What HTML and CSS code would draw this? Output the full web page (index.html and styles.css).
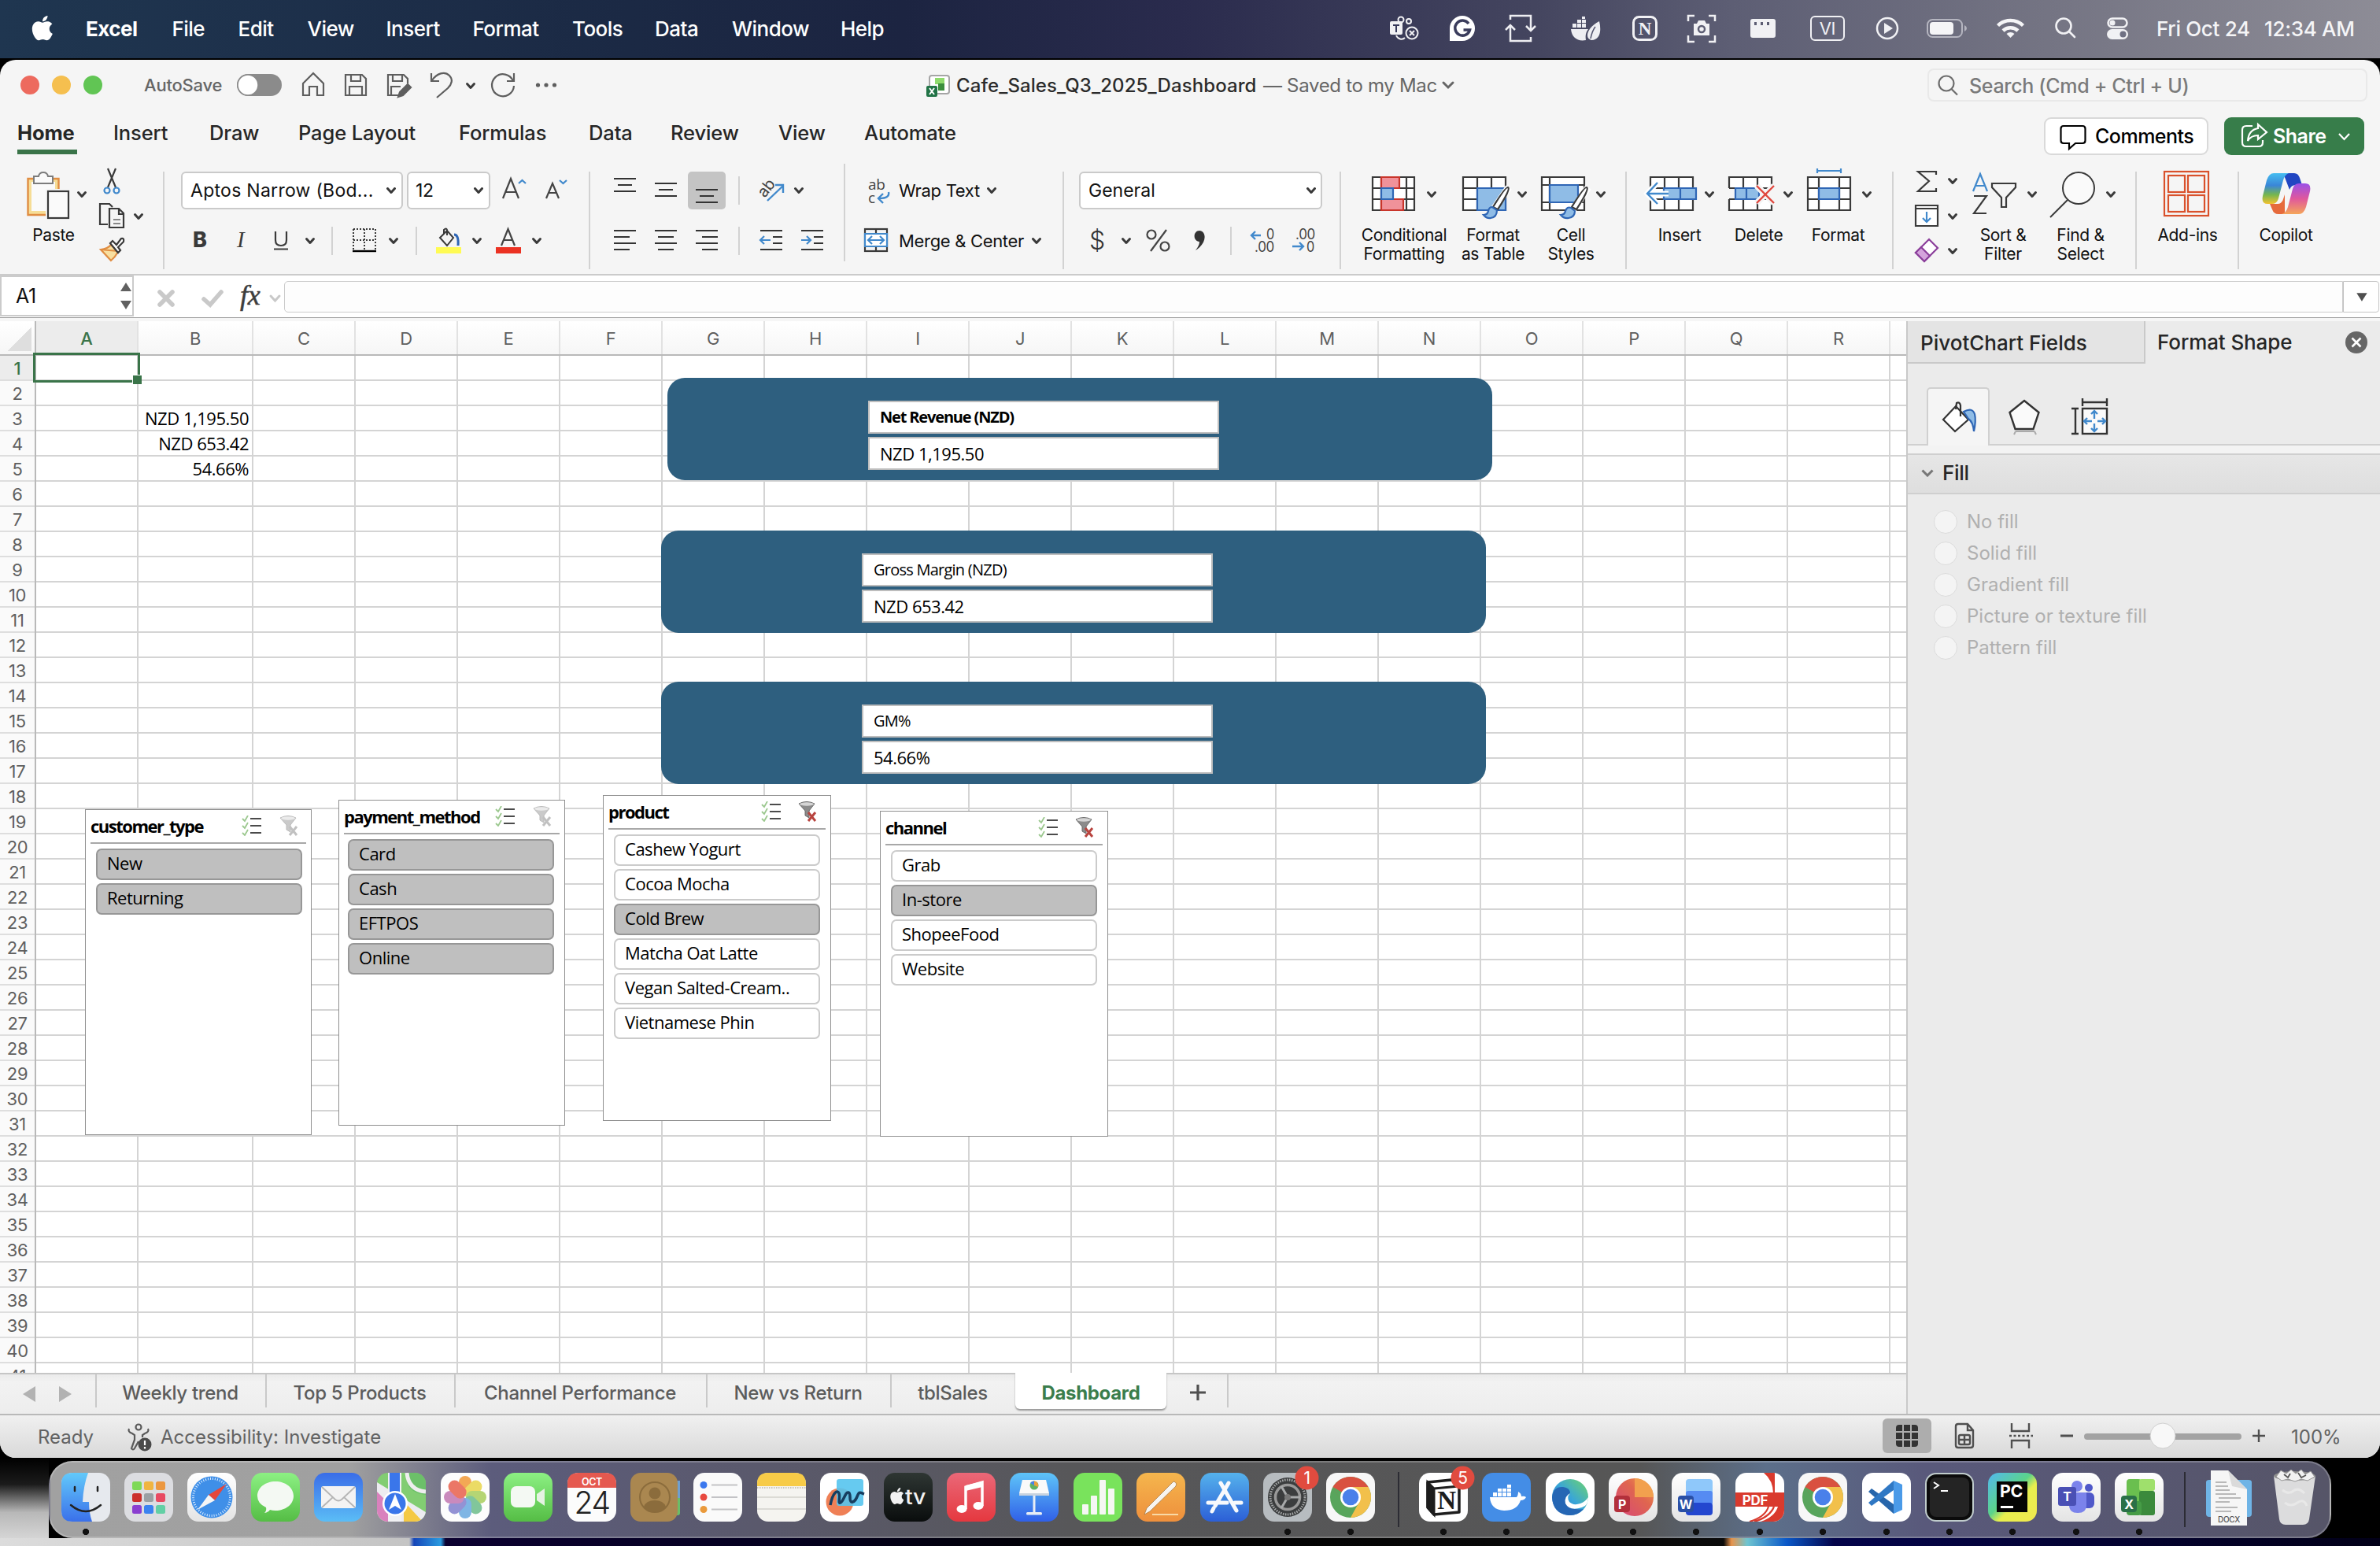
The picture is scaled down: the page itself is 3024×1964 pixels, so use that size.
FILE: index.html
```html
<!DOCTYPE html>
<html lang="en">
<head>
<meta charset="utf-8">
<title>Cafe_Sales_Q3_2025_Dashboard</title>
<link rel="stylesheet" href="styles.css">
</head>
<body>
<svg class="defs" width="0" height="0">
  <defs>
    <path id="chev" d="M1.5 1.5l4.5 5 4.5-5" fill="none" stroke="#3a3a3a" stroke-width="3" stroke-linecap="round" stroke-linejoin="round"/>
    <path id="apple" d="M20.6 13.8c0-3 2.4-4.4 2.5-4.5-1.4-2-3.500-2.300-4.200-2.300-1.800-.2-3.500 1-4.400 1s-2.300-1-3.700-1c-1.900 0-3.700 1.100-4.700 2.800-2 3.500-.5 8.600 1.400 11.400 1 1.400 2.100 2.900 3.600 2.900 1.400-.1 2-.9 3.700-.9s2.200.9 3.700.9c1.500 0 2.500-1.400 3.400-2.800 1.100-1.600 1.500-3.100 1.600-3.200-.1 0-2.900-1.200-2.900-4.300zM17.800 5.300c.8-1 1.300-2.300 1.200-3.600-1.100 0-2.500.7-3.300 1.700-.7.800-1.400 2.200-1.200 3.500 1.200.1 2.500-.6 3.300-1.600z"/>
    <g id="list"><path d="M1 4l3 3 4-7M1 13l3 3 4-7M1 22l3 3 4-7" fill="none" stroke="#9cc88f" stroke-width="1.800"/><path d="M11 4h14M11 13h14M11 22h14" stroke="#4b4b4b" stroke-width="2"/></g>
    <g id="funnel"><path d="M1 3q10-5 20 0l-7 9v9l-5-3v-6z" fill="#8b8b8b" stroke="#6b6b6b"/><ellipse cx="11" cy="3.500" rx="9" ry="2.200" fill="#d5d5d5"/></g>
    <linearGradient id="gBlue" x1="0" y1="0" x2="0" y2="1"><stop offset="0" stop-color="#5ec4f8"/><stop offset="1" stop-color="#3060e8"/></linearGradient>
    <linearGradient id="gGreen" x1="0" y1="0" x2="0" y2="1"><stop offset="0" stop-color="#8cf083"/><stop offset="1" stop-color="#55bd45"/></linearGradient>
    <linearGradient id="gWhite" x1="0" y1="0" x2="0" y2="1"><stop offset="0" stop-color="#ffffff"/><stop offset="1" stop-color="#e4e4e4"/></linearGradient>
    <linearGradient id="gMail" x1="0" y1="0" x2="0" y2="1"><stop offset="0" stop-color="#3a6de8"/><stop offset="1" stop-color="#5bbdf6"/></linearGradient>
    <linearGradient id="gRed" x1="0" y1="0" x2="0" y2="1"><stop offset="0" stop-color="#ea6878"/><stop offset="1" stop-color="#e5383f"/></linearGradient>
    <linearGradient id="gOrange" x1="0" y1="0" x2="0" y2="1"><stop offset="0" stop-color="#f5b64d"/><stop offset="1" stop-color="#ee8f3c"/></linearGradient>
    <linearGradient id="gStore" x1="0" y1="0" x2="0" y2="1"><stop offset="0" stop-color="#55b2ec"/><stop offset="1" stop-color="#2c5fd6"/></linearGradient>
    <linearGradient id="gFinder" x1="0" y1="0" x2="0" y2="1"><stop offset="0" stop-color="#62c9fa"/><stop offset="1" stop-color="#3a70ea"/></linearGradient>
    <linearGradient id="gBlk" x1="0" y1="0" x2="0" y2="1"><stop offset="0" stop-color="#2e3633"/><stop offset="1" stop-color="#0a0d0d"/></linearGradient>
    <linearGradient id="gCopA" x1="0" y1="0" x2="0" y2="1"><stop offset="0" stop-color="#45bdf0"/><stop offset=".4" stop-color="#3a86d8"/><stop offset=".7" stop-color="#74b64f"/><stop offset="1" stop-color="#f3c230"/></linearGradient>
    <linearGradient id="gCopB" x1="0" y1="0" x2="0" y2="1"><stop offset="0" stop-color="#9a50e8"/><stop offset=".5" stop-color="#e0589c"/><stop offset="1" stop-color="#f5a659"/></linearGradient>
    <linearGradient id="gEdge" x1="0" y1="1" x2="1" y2="0"><stop offset="0" stop-color="#2468b8"/><stop offset=".5" stop-color="#39a5d8"/><stop offset="1" stop-color="#6fd66a"/></linearGradient>
    <linearGradient id="gPpt" x1="0" y1="1" x2="1" y2="0"><stop offset="0" stop-color="#d6467a"/><stop offset=".6" stop-color="#e0664f"/><stop offset="1" stop-color="#f3a24a"/></linearGradient>
    <linearGradient id="gPy" x1="0" y1="0" x2="1" y2="1"><stop offset="0" stop-color="#52b8f0"/><stop offset=".45" stop-color="#5bd38a"/><stop offset=".6" stop-color="#e8ee4e"/><stop offset="1" stop-color="#f1e94f"/></linearGradient>
    <g id="chrome">
      <rect width="62" height="62" rx="14" fill="#f7f7f7"/>
      <circle cx="31" cy="31" r="26" fill="#58a55c"/>
      <path d="M31 31L8.500 18A26 26 0 0 1 53.500 18z" fill="#d95140"/>
      <path d="M31 18h22.500A26 26 0 0 1 31 57l11-20z" fill="#f2c04b"/>
      <path d="M8.500 18L20 37l11-6V18z" fill="#d95140"/>
      <path d="M8.500 18l11.300 19.500L31 31z" fill="#58a55c"/>
      <circle cx="31" cy="31" r="13" fill="#fff"/><circle cx="31" cy="31" r="10.300" fill="#4a80ea"/>
    </g>
  </defs>
</svg>

<div class="desktop">
  <header class="menubar">
    <svg class="logo" viewBox="40 14 69 44" width="69" height="44"><use href="#apple" transform="translate(33.500 16.500) scale(1.420 1.400)" fill="#fff"/></svg>
    <nav class="menus"><b>Excel</b><span>File</span><span>Edit</span><span>View</span><span>Insert</span><span>Format</span><span>Tools</span><span>Data</span><span>Window</span><span>Help</span></nav>
    <div class="extras">
      <svg viewBox="1760 14 64 48" width="64" height="48" fill="none" stroke="#f1f1f4" stroke-width="2"><rect x="1766" y="28" width="16" height="17" rx="2" fill="#f1f1f4" stroke="none"/><path d="M1770 33h8M1774 33v9" stroke="#35385a"/><circle cx="1780" cy="26" r="3.500"/><circle cx="1790" cy="28" r="3"/><path d="M1774 46c2 5 8 6 11 3"/><circle cx="1794" cy="43" r="7.500"/><path d="M1791 40l6 6M1797 40l-6 6"/></svg>
      <svg viewBox="1824 14 72 48" width="72" height="48"><path d="M1842 53V37a16 16 0 1 1 16 16z" fill="#fff"/><path d="M1866 31a9.500 9.500 0 1 0 1.500 8h-8" fill="none" stroke="#3a3c5c" stroke-width="3.500"/></svg>
      <svg viewBox="1896 14 80 48" width="80" height="48" fill="none" stroke="#eeeef2" stroke-width="2.500"><path d="M1919 26v-5h26v18M1939 34l6 6 6-6M1945 48v5h-26V33M1913 39l6-6 6 6"/></svg>
      <svg viewBox="1976 14 80 48" width="80" height="48" fill="#eeeef2"><path d="M1996 38h22c-3 4-4 8-3 14-10 2-18-3-19-14zM1998 31h5v5h-5zM2004 31h5v5h-5zM2010 31h5v5h-5zM2004 26h5v4h-5zM2010 26h5v4h-5zM2010 22h4v3h-4z"/><path d="M2032 28c3 12 1 24-10 24-9-2-6-16 10-24z"/><path d="M2021 50q2-10 6-15" stroke="#50526c" stroke-width="1.500" fill="none"/></svg>
      <svg viewBox="2056 14 72 48" width="72" height="48"><rect x="2075.500" y="22.500" width="29" height="29" rx="7" fill="none" stroke="#f1f1f4" stroke-width="3"/><text x="2090" y="45" class="serif-n" fill="#f1f1f4" text-anchor="middle">N</text></svg>
      <svg viewBox="2128 14 72 48" width="72" height="48" fill="none" stroke="#f1f1f4" stroke-width="2.500"><path d="M2145 28v-7h8M2171 21h8v7M2179 46v8h-8M2153 54h-8v-8"/><path d="M2152 31h4l2-4h8l2 4h4v15h-20z" fill="#f1f1f4" stroke="none"/><circle cx="2162" cy="38" r="4" stroke="#5c5d73"/></svg>
      <svg viewBox="2200 14 80 48" width="80" height="48"><rect x="2224" y="25" width="32" height="24" rx="3" fill="#f1f1f4"/><path d="M2229 31h3M2237 31h3M2245 31h3" stroke="#5c5d73" stroke-width="4"/></svg>
      <svg viewBox="2280 14 84 48" width="84" height="48"><rect x="2301" y="22" width="42" height="30" rx="5" fill="none" stroke="#f1f1f4" stroke-width="2"/><text x="2322" y="45" class="vi" fill="#f1f1f4" text-anchor="middle">VI</text></svg>
      <svg viewBox="2364 14 66 48" width="66" height="48"><circle cx="2398" cy="37" r="13" fill="none" stroke="#f1f1f4" stroke-width="2.500"/><path d="M2394 30l11 7-11 7z" fill="#f1f1f4"/></svg>
      <svg viewBox="2430 14 84 48" width="84" height="48"><rect x="2449" y="26" width="44" height="22" rx="6.500" fill="none" stroke="#b5b5c0" stroke-width="2"/><rect x="2452" y="29" width="30" height="16" rx="4" fill="#f5f5f7"/><path d="M2496 33q3 1.500 3 4t-3 4z" fill="#b5b5c0"/></svg>
      <svg viewBox="2514 14 76 48" width="76" height="48" fill="none" stroke="#f5f5f7" stroke-width="4.500"><path d="M2538.500 33.500a23 23 0 0 1 32 0M2545 40a14 14 0 0 1 19 0"/><path d="M2554.500 49l-5-5a7 7 0 0 1 10 0z" fill="#f5f5f7" stroke="none"/></svg>
      <svg viewBox="2590 14 66 48" width="66" height="48" fill="none" stroke="#f1f1f4" stroke-width="2.600" stroke-linecap="round"><circle cx="2622" cy="34" r="9.500"/><path d="M2629 41l7 7"/></svg>
      <svg viewBox="2656 14 84 48" width="84" height="48"><rect x="2678.500" y="24.500" width="24" height="11" rx="5.500" fill="none" stroke="#f1f1f4" stroke-width="2.500"/><circle cx="2684" cy="30" r="3.500" fill="#f1f1f4"/><rect x="2677" y="38" width="27" height="13" rx="6.500" fill="#f1f1f4"/><circle cx="2697.500" cy="44.500" r="4" fill="#6f7083"/></svg>
    </div>
    <div class="clock"><span>Fri Oct 24</span><span>12:34 AM</span></div>
  </header>

  <main class="window">
    <div class="titlebar">
      <svg class="lights" viewBox="0 78 183 60" width="183" height="60"><circle cx="38" cy="108" r="12" fill="#ed6a5e"/><circle cx="78" cy="108" r="12" fill="#f5bf4f"/><circle cx="118" cy="108" r="12" fill="#61c554"/></svg>
      <span class="autosave">AutoSave</span>
      <svg class="quick" viewBox="290 78 430 60" width="430" height="60" fill="none" stroke="#5e5e5e" stroke-width="2.200">
        <rect x="301" y="94" width="57" height="28" rx="14" fill="#8b8b8b" stroke="none"/><circle cx="315" cy="108" r="13" fill="#fff" stroke="#8b8b8b" stroke-width="1.500"/>
        <path d="M385 106l13-13 13 13v15h-8v-11h-10v11h-8z"/>
        <path d="M440 95h20l5 5v21h-26V95zM446 95v8h12v-8M444 121v-11h16v11"/>
        <path d="M508 121h-15V95h20l5 5v6M499 95v8h12v-8M497 121v-11h12"/><path d="M506 123l2-6 10-10 4 4-10 10z" fill="#5e5e5e"/>
        <path d="M548 93v10h10M549 102c6-9 16-12 22-6 5 5 3 11-2 16l-14 12"/>
        <path d="M652 103a14 14 0 1 0 1 6M653 93v10h-9"/>
        <g fill="#5e5e5e" stroke="none"><circle cx="683.500" cy="108" r="2.600"/><circle cx="694" cy="108" r="2.600"/><circle cx="704.500" cy="108" r="2.600"/></g>
        <use href="#chev" x="592" y="105"/>
      </svg>
      <div class="doc">
        <svg viewBox="1175 92 36 34" width="36" height="34"><rect x="1181" y="97" width="25" height="23" rx="3" fill="#fff" stroke="#a5a5a5" stroke-width="2"/><rect x="1188" y="100" width="12" height="8" fill="#8fdb6c"/><rect x="1192" y="107" width="8" height="9" fill="#3c8f3d"/><rect x="1177" y="110" width="14" height="14" rx="2" fill="#217346"/><path d="M1181 113l6 8M1187 113l-6 8" stroke="#fff" stroke-width="2"/></svg>
        <span class="doc-name">Cafe_Sales_Q3_2025_Dashboard</span><span class="doc-state">— Saved to my Mac</span>
        <svg viewBox="1826 98 26 20" width="26" height="20"><path d="M1834 105l6 6 6-6" fill="none" stroke="#666" stroke-width="3" stroke-linecap="round"/></svg>
      </div>
      <div class="search"><svg viewBox="2451 89 50 38" width="50" height="38" fill="none" stroke="#6c6c6c" stroke-width="2.200"><circle cx="2473" cy="106" r="9.500"/><path d="M2479.500 113l7.500 7.500"/></svg><span>Search (Cmd + Ctrl + U)</span></div>
    </div>

    <div class="tabbar">
      <nav class="tabs"><b class="on">Home</b><span>Insert</span><span>Draw</span><span>Page Layout</span><span>Formulas</span><span>Data</span><span>Review</span><span>View</span><span>Automate</span></nav>
      <button class="comments"><svg viewBox="2610 152 46 40" width="46" height="40"><path d="M2620 159h24q3.500 0 3.500 3.500v15q0 3.500-3.500 3.500h-9l-8 7v-7h-7q-3.500 0-3.500-3.500v-15q0-3.500 3.500-3.500z" fill="none" stroke="#000" stroke-width="2.200"/></svg>Comments</button>
      <button class="share"><svg viewBox="2844 152 42 40" width="42" height="40" fill="none" stroke="#fff" stroke-width="2.200"><path d="M2862 159h-8q-5 0-5 5v16q0 5 5 5h16q5 0 5-5v-3"/><path d="M2869 157l11 10-11 9v-5q-9 0-13 7 1-14 13-16z"/></svg>Share<svg viewBox="2968 162 28 20" width="28" height="20"><path d="M2976 169l6.500 7 6.500-7" fill="none" stroke="#fff" stroke-width="2.200"/></svg></button>
    </div>

    <div class="ribbon">
      <div class="group clip">
        <div class="big paste"><svg viewBox="16 210 104 74" width="104" height="74"><path d="M35.500 227h39v46h-39z" fill="#f6dd96" stroke="#e08d42" stroke-width="2.400"/><rect x="40" y="231" width="30" height="37" fill="#fafafa"/><path d="M43 233v-9h6q1-5 6-5t6 5h6v9z" fill="#fafafa" stroke="#7c7c7c" stroke-width="2"/><rect x="58" y="240" width="32" height="40" fill="#f5f5f5"/><rect x="61" y="243" width="26" height="34" fill="#fafafa" stroke="#3a3a3a" stroke-width="2.200"/><use href="#chev" x="98" y="243"/></svg><span>Paste</span></div>
        <svg viewBox="120 206 87 136" width="87" height="136" fill="none" stroke="#3a3a3a" stroke-width="2.200"><path d="M137 214l10 24M147 214l-10 24"/><g stroke="#4189cc"><circle cx="136" cy="242" r="3.500"/><circle cx="148" cy="242" r="3.500"/></g><path d="M137 285h-10v-26h12l4 4"/><path d="M139 265h12l6 6v18h-18zM151 265v7h6"/><path d="M144 279h9M144 284h9" stroke="#888"/><use href="#chev" x="170" y="271"/><path d="M128 317q9-1 13-6l9 9q-4 7-9 11z" fill="#f8dfa0" stroke="#e08d42"/><path d="M128 317l22 2" stroke="#e08d42"/><path d="M140 309l3-3 5 5 6-8q4-1 3 4l-7 7 3 4-3 3z" fill="#fff"/></svg>
      </div>
      <i class="sep"></i>
      <div class="group font">
        <div class="row"><div class="combo fam">Aptos Narrow (Bod...<svg viewBox="0 0 12 9" width="12" height="9"><use href="#chev"/></svg></div><div class="combo size">12<svg viewBox="0 0 12 9" width="12" height="9"><use href="#chev"/></svg></div>
          <svg viewBox="623 218 62 48" width="62" height="48" fill="none" stroke="#444" stroke-width="2.200"><path d="M639 252l10-25 10 25M643 244h12"/><path d="M659 233l4.500-4 4.500 4" stroke="#4189cc"/></svg><svg viewBox="685 218 60 48" width="60" height="48" fill="none" stroke="#444" stroke-width="2.200"><path d="M694 252l8-19 8 19M697 245h10"/><path d="M711 229l4.500 4 4.500-4" stroke="#4189cc"/></svg></div>
        <div class="row two">
          <svg viewBox="229 280 52 52" width="52" height="52"><text x="245" y="314" class="fmt bold">B</text></svg><svg viewBox="281 280 52 52" width="52" height="52"><text x="301" y="314" class="fmt ital">I</text></svg><svg viewBox="333 280 88 52" width="88" height="52"><path d="M350 294v11q0 7 7 7t7-7v-11M348 316.500h18" fill="none" stroke="#3a3a3a" stroke-width="2.200"/><use href="#chev" x="388" y="302"/></svg>
          <i class="mini"></i>
          <svg viewBox="423 280 105 52" width="105" height="52"><path d="M449 291h28M449 305h28M449 291v26M463 291v26M477 291v26" stroke="#3a3a3a" stroke-width="2" stroke-dasharray="2 2"/><path d="M448 319h30" stroke="#000" stroke-width="2.400"/><use href="#chev" x="494" y="302"/></svg>
          <i class="mini"></i>
          <svg viewBox="530 280 90 52" width="90" height="52"><rect x="554" y="314" width="32" height="8" fill="#fffb54"/><path d="M559 302l9-9 8 9-8 10zM568 299v-7q-1-3-4 0v5" fill="none" stroke="#3a3a3a" stroke-width="2"/><path d="M577 298q6 0 5 14" stroke="#2f66b5" stroke-width="3" fill="none"/><use href="#chev" x="600" y="302"/></svg><svg viewBox="620 280 90 52" width="90" height="52"><rect x="630" y="314" width="32" height="8" fill="#eb3223"/><path d="M637 312l8.500-21 8.500 21M640.500 305h10" fill="none" stroke="#444" stroke-width="2.200"/><use href="#chev" x="676" y="302"/></svg>
        </div>
      </div>
      <i class="sep"></i>
      <div class="group align">
        <div class="row">
          <svg viewBox="768 218 52 48" width="52" height="48"><path d="M780 227h28M785 235h18M780 243h28" stroke="#333" stroke-width="2.200"/></svg><svg viewBox="820 218 54 48" width="54" height="48"><path d="M832 233h28M837 241h18M832 249h28" stroke="#333" stroke-width="2.200"/></svg><svg viewBox="874 218 64 48" width="64" height="48"><rect x="874" y="218" width="48" height="48" rx="5" fill="#c4c4c4"/><path d="M884 241h28M889 249h18M884 257h28" stroke="#333" stroke-width="2.200"/></svg><i class="mini"></i><svg viewBox="940 218 100 48" width="100" height="48"><text x="964" y="248" class="orient" transform="rotate(-52 972 242)">ab</text><path d="M975 255l20-19M985 235h10v10" fill="none" stroke="#4189cc" stroke-width="2.400"/><use href="#chev" x="1009" y="238"/></svg>
        </div>
        <div class="row two">
          <svg viewBox="768 280 52 52" width="52" height="52"><path d="M780 293h28M780 301h20M780 309h28M780 317h20" stroke="#333" stroke-width="2.200"/></svg><svg viewBox="820 280 54 52" width="54" height="52"><path d="M832 293h28M836 301h20M832 309h28M836 317h20" stroke="#333" stroke-width="2.200"/></svg><svg viewBox="874 280 64 52" width="64" height="52"><path d="M884 293h28M892 301h20M884 309h28M892 317h20" stroke="#333" stroke-width="2.200"/></svg><i class="mini"></i><svg viewBox="940 280 66 52" width="66" height="52" fill="none" stroke="#333" stroke-width="2.200"><path d="M966 293h28M982 301h12M982 309h12M966 317h28"/><path d="M979 305h-12M971 300l-5 5 5 5" stroke="#4189cc"/></svg><svg viewBox="1006 280 60 52" width="60" height="52" fill="none" stroke="#333" stroke-width="2.200"><path d="M1018 293h28M1034 301h12M1034 309h12M1018 317h28"/><path d="M1018 305h12M1025 300l5 5-5 5" stroke="#4189cc"/></svg>
        </div>
      </div>
      <i class="sep up"></i>
      <div class="group wrap">
        <div class="row"><svg viewBox="1092 218 50 48" width="50" height="48"><text x="1103" y="241" class="abc">ab</text><text x="1103" y="258" class="abc">c</text><path d="M1129 244q2 8-12 8M1122 246l-6 6 6 6" fill="none" stroke="#4189cc" stroke-width="2.400"/></svg><span class="wt">Wrap Text</span><svg viewBox="0 0 12 9" width="12" height="9"><use href="#chev"/></svg></div>
        <div class="row two"><svg viewBox="1092 280 50 52" width="50" height="52" fill="none" stroke="#3a3a3a" stroke-width="2.200"><rect x="1099" y="291" width="28" height="28"/><path d="M1113 291v6M1113 313v6"/><path d="M1099 297h28v16h-28z" fill="#fff" stroke="#4189cc"/><path d="M1103 305h20M1108 300l-5 5 5 5M1118 300l5 5-5 5" stroke="#4189cc"/></svg><span class="mc">Merge &amp; Center</span><svg viewBox="0 0 12 9" width="12" height="9"><use href="#chev"/></svg></div>
      </div>
      <i class="sep"></i>
      <div class="group number">
        <div class="row"><div class="combo gen">General<svg viewBox="0 0 12 9" width="12" height="9"><use href="#chev"/></svg></div></div>
        <div class="row two"><svg viewBox="1371 280 75 52" width="75" height="52"><text x="1384" y="317" class="sym">$</text><use href="#chev" x="1425" y="302"/></svg><svg viewBox="1446 280 50 52" width="50" height="52" fill="none" stroke="#444" stroke-width="2.200"><circle cx="1463" cy="298" r="5.500"/><circle cx="1480" cy="313" r="5.500"/><path d="M1482 292l-20 27"/></svg><svg viewBox="1496 280 67 52" width="67" height="52"><path d="M1524 293c10 1 9 17-5 25q5-6 5-11c-9-1-8-14 0-14z" fill="#333"/></svg><i class="mini"></i><svg viewBox="1565 280 60 52" width="60" height="52"><path d="M1602 299h-12M1595 294l-5 5 5 5" fill="none" stroke="#4189cc" stroke-width="2.400"/><text x="1609" y="304" class="dec" textLength="10" lengthAdjust="spacingAndGlyphs">0</text><text x="1594" y="320" class="dec" textLength="25" lengthAdjust="spacingAndGlyphs">.00</text></svg><svg viewBox="1625 280 60 52" width="60" height="52"><text x="1646" y="304" class="dec" textLength="25" lengthAdjust="spacingAndGlyphs">.00</text><path d="M1642 313h14M1651 308l5 5-5 5" fill="none" stroke="#4189cc" stroke-width="2.400"/><text x="1660" y="320" class="dec" textLength="10" lengthAdjust="spacingAndGlyphs">0</text></svg></div>
      </div>
      <i class="sep"></i>
      <div class="group styles">
        <div class="big cf"><svg viewBox="1724 210 120 74" width="120" height="74" fill="none" stroke="#3a3a3a" stroke-width="2.200"><path d="M1744 225h53v42h-53zM1744 239h53M1744 253h53M1755 225v42M1787 225v42" fill="#fff"/><path d="M1755 225h23v14h-23zM1755 253h28v14h-28z" fill="#f0929a" stroke="#c9352b"/><path d="M1755 239h15v14h-15z" fill="#8fbce6" stroke="#2f66b5"/><use href="#chev" x="1813" y="243"/></svg><span>Conditional</span><span>Formatting</span></div>
        <div class="big ft"><svg viewBox="1844 210 106 74" width="106" height="74" fill="none" stroke="#3a3a3a" stroke-width="2.200"><path d="M1859 225h54v42h-54zM1859 239h54M1859 253h54M1877 225v42M1895 225v42" fill="#fff"/><path d="M1877 239h36v28h-36z" fill="#8fbce6" stroke="#2f66b5"/><path d="M1917 238l-22 32" stroke="#fff" stroke-width="9"/><path d="M1916 238q4 2-13 28l-6-3q16-26 19-25z" fill="#fff"/><path d="M1896 263l6 4q0 9-8 10-5 1-9-4 5 0 6-5 1-5 5-5z" fill="#8fbce6" stroke="#2f66b5"/><use href="#chev" x="1928" y="243"/></svg><span>Format</span><span>as Table</span></div>
        <div class="big cs"><svg viewBox="1950 210 92 74" width="92" height="74" fill="none" stroke="#3a3a3a" stroke-width="2.200"><path d="M1959 225h54v42h-54zM1959 235h54M1959 257h54M1969 225v42" fill="#fff"/><path d="M1969 235h36v22h-36z" fill="#8fbce6" stroke="#2f66b5"/><path d="M2018 238l-22 32" stroke="#fff" stroke-width="9"/><path d="M2016 238q4 2-13 28l-6-3q16-26 19-25z" fill="#fff"/><path d="M1983 273q5 0 6-5 2-6 7-4l0 0 5 4q0 8-8 9-6 1-10-4z" fill="#8fbce6" stroke="#2f66b5"/><use href="#chev" x="2028" y="243"/></svg><span>Cell</span><span>Styles</span></div>
      </div>
      <i class="sep"></i>
      <div class="group cells">
        <div class="big ins"><svg viewBox="2086 210 96 74" width="96" height="74" fill="none" stroke="#3a3a3a" stroke-width="2.200"><path d="M2097 225h54v42h-54zM2097 239h54M2097 253h54M2115 225v42M2133 225v42" fill="#fff"/><path d="M2114 239h41v14h-41zM2135 239v14" fill="#8fbce6" stroke="#2f66b5"/><path d="M2120 246h-26M2106 232l-13 14 13 13" stroke="#fff" stroke-width="7"/><path d="M2120 246h-26M2106 232l-13 14 13 13" stroke="#4189cc" stroke-width="2.400"/><use href="#chev" x="2166" y="243"/></svg><span>Insert</span></div>
        <div class="big del"><svg viewBox="2182 210 105 74" width="105" height="74" fill="none" stroke="#3a3a3a" stroke-width="2.200"><path d="M2197 239v-14h54v14M2197 253v14h54v-14M2197 239h54M2197 253h54M2215 225v14M2233 225v14M2215 253v14M2233 253v14" fill="#fff"/><path d="M2205 239h30v14h-30zM2219 239v14" fill="#8fbce6" stroke="#2f66b5"/><path d="M2232 236l22 22M2254 236l-22 22" stroke="#f5f5f5" stroke-width="8"/><path d="M2232 236l22 22M2254 236l-22 22" stroke="#e0483e" stroke-width="2.400"/><use href="#chev" x="2266" y="243"/></svg><span>Delete</span></div>
        <div class="big fmtc"><svg viewBox="2287 210 97 74" width="97" height="74" fill="none" stroke="#3a3a3a" stroke-width="2.200"><path d="M2309 217h30M2309 214v6M2339 214v6" stroke="#4189cc"/><path d="M2297 225h54v42h-54zM2297 239h54M2297 253h54M2311 225v42M2337 225v42" fill="#fff"/><path d="M2311 239h26v14h-26z" fill="#8fbce6" stroke="#2f66b5"/><use href="#chev" x="2366" y="243"/></svg><span>Format</span></div>
      </div>
      <i class="sep"></i>
      <div class="group edit">
        <svg viewBox="2406 206 94 136" width="94" height="136" fill="none" stroke="#3a3a3a" stroke-width="2.200"><path d="M2460 222v-4h-23l14 12-14 13h23v-4"/><use href="#chev" x="2475" y="226"/><path d="M2434 261h28v26h-28zM2434 265h28" fill="#fff"/><path d="M2448 269v13M2443 277l5 5 5-5" stroke="#4189cc"/><use href="#chev" x="2475" y="271"/><path d="M2434 321l17-17 11 11-17 17z" fill="#fff" stroke="#8b3f9b"/><path d="M2434 321l7-7 11 11-7 7z" fill="#d4a4dc" stroke="#8b3f9b"/><use href="#chev" x="2475" y="315"/></svg>
        <div class="big sort"><svg viewBox="2500 210 90 74" width="90" height="74" fill="none" stroke="#3a3a3a" stroke-width="2.200"><path d="M2507 243l9-22 9 22M2510 236h12" stroke="#4189cc"/><path d="M2508 249h16l-16 22h16M2531 233h30v5l-12 13v12h-6v-12l-12-13z"/><use href="#chev" x="2576" y="243"/></svg><span>Sort &amp;</span><span>Filter</span></div>
        <div class="big find"><svg viewBox="2590 210 107 74" width="107" height="74" fill="none" stroke="#3a3a3a" stroke-width="2"><circle cx="2641" cy="239" r="20" fill="#fafafa"/><path d="M2627 254l-22 22"/><use href="#chev" x="2676" y="243"/></svg><span>Find &amp;</span><span>Select</span></div>
      </div>
      <i class="sep"></i>
      <div class="big addins"><svg viewBox="2716 210 127 74" width="127" height="74" fill="none" stroke="#d9512c" stroke-width="2.200"><rect x="2750" y="218" width="56" height="56"/><rect x="2755" y="223" width="21" height="21"/><rect x="2780" y="223" width="21" height="21"/><rect x="2755" y="248" width="21" height="21"/><rect x="2780" y="248" width="21" height="21"/></svg><span>Add-ins</span></div>
      <i class="sep"></i>
      <div class="big copilot"><svg viewBox="2846 210 117 74" width="117" height="74"><path d="M2901 220h14q5 0 7 6l3 9h-8q-6 0-8 6z" fill="#2146c2"/><path d="M2889 220h19q-5 2-7 9l-6 23q-2 7-8 7h-6q-8 0-6-10l5-20q3-9 9-9z" fill="url(#gCopA)"/><path d="M2894 259q5 0 7-6l2-6v25h-8q-6 0-8-6l-3-7z" fill="#e66a3c"/><path d="M2921 272h-22q6-2 8-9l6-23q2-7 8-7h8q8 0 6 10l-5 20q-3 9-9 9z" fill="url(#gCopB)"/></svg><span>Copilot</span></div>
    </div>

    <div class="formula">
      <div class="namebox"><span>A1</span><svg viewBox="150 354 18 42" width="18" height="42" fill="#606060"><path d="M153 369l7-11 7 11zM153 381h14l-7 11z"/></svg></div>
      <svg class="fxbar" viewBox="170 352 190 48" width="190" height="48" fill="none" stroke="#c9c9c9" stroke-width="5.500" stroke-linecap="round"><path d="M203 371l16 16M219 371l-16 16M259 380l8 7 14-16"/><text x="305" y="387" class="fx">fx</text><path d="M344 376l5.500 6 5.500-6" stroke-width="3"/></svg>
      <div class="input"></div>
      <div class="drop"><svg viewBox="2976 358 46 38" width="46" height="38"><path d="M2993 372h14l-7 11z" fill="#4f4f4f"/></svg></div>
    </div>

    <div class="work">
      <section class="sheet">
        <div class="cols"><i class="corner"></i><b>A</b><span class="wide">B</span><span>C</span><span>D</span><span>E</span><span>F</span><span>G</span><span>H</span><span>I</span><span>J</span><span>K</span><span>L</span><span>M</span><span>N</span><span>O</span><span>P</span><span>Q</span><span>R</span><span></span></div>
        <div class="body">
          <div class="rows"><b>1</b><span>2</span><span>3</span><span>4</span><span>5</span><span>6</span><span>7</span><span>8</span><span>9</span><span>10</span><span>11</span><span>12</span><span>13</span><span>14</span><span>15</span><span>16</span><span>17</span><span>18</span><span>19</span><span>20</span><span>21</span><span>22</span><span>23</span><span>24</span><span>25</span><span>26</span><span>27</span><span>28</span><span>29</span><span>30</span><span>31</span><span>32</span><span>33</span><span>34</span><span>35</span><span>36</span><span>37</span><span>38</span><span>39</span><span>40</span><span>41</span></div>
          <div class="grid">
            <div class="cell r3">NZD 1,195.50</div><div class="cell r4">NZD 653.42</div><div class="cell r5">54.66%</div>
            <div class="cursor"></div>
            <div class="kpi k1"><div class="strong">Net Revenue (NZD)</div><div>NZD 1,195.50</div></div>
            <div class="kpi k2"><div class="cap">Gross Margin (NZD)</div><div>NZD 653.42</div></div>
            <div class="kpi k3"><div class="cap">GM%</div><div>54.66%</div></div>
            <div class="slicer s1"><h3>customer_type<svg viewBox="0 0 74 26" width="74" height="26"><use href="#list"/><g opacity=".45"><use href="#funnel" x="48"/><path d="M61 14l9 11M70 14l-9 11" stroke="#777" stroke-width="3"/></g></svg></h3><p class="on">New</p><p class="on">Returning</p></div>
            <div class="slicer s2"><h3>payment_method<svg viewBox="0 0 74 26" width="74" height="26"><use href="#list"/><g opacity=".45"><use href="#funnel" x="48"/><path d="M61 14l9 11M70 14l-9 11" stroke="#777" stroke-width="3"/></g></svg></h3><p class="on">Card</p><p class="on">Cash</p><p class="on">EFTPOS</p><p class="on">Online</p></div>
            <div class="slicer s3"><h3>product<svg viewBox="0 0 74 26" width="74" height="26"><use href="#list"/><use href="#funnel" x="47"/><path d="M60 14l9 11M69 14l-9 11" stroke="#b8443f" stroke-width="3"/></svg></h3><p>Cashew Yogurt</p><p>Cocoa Mocha</p><p class="on">Cold Brew</p><p>Matcha Oat Latte</p><p>Vegan Salted-Cream..</p><p>Vietnamese Phin</p></div>
            <div class="slicer s4"><h3>channel<svg viewBox="0 0 74 26" width="74" height="26"><use href="#list"/><use href="#funnel" x="47"/><path d="M60 14l9 11M69 14l-9 11" stroke="#b8443f" stroke-width="3"/></svg></h3><p>Grab</p><p class="on">In-store</p><p>ShopeeFood</p><p>Website</p></div>
          </div>
        </div>
        <div class="sheettabs"><svg viewBox="0 1746 121 50" width="121" height="50" fill="#b2b2b2"><path d="M45 1761v20l-16-10zM75 1761v20l16-10z"/></svg><span class="t1">Weekly trend</span><span class="t2">Top 5 Products</span><span class="t3">Channel Performance</span><span class="t4">New vs Return</span><span class="t5">tblSales</span><b>Dashboard</b><span class="t6"><svg viewBox="0 0 20 20" width="20" height="20"><path d="M10 0v20M0 10h20" stroke="#505050" stroke-width="3.200"/></svg></span></div>
      </section>
      <aside class="panel">
        <div class="ptabs"><span>PivotChart Fields</span><div>Format Shape<svg viewBox="0 0 28 28" width="28" height="28"><circle cx="14" cy="14" r="14" fill="#666"/><path d="M8.500 8.500l11 11M19.500 8.500l-11 11" stroke="#fff" stroke-width="2.600"/></svg></div></div>
        <div class="picons"><span><svg viewBox="2450 494 76 72" width="76" height="72" fill="none" stroke="#333" stroke-width="2.200"><path d="M2469 533l16-17 16 17-17 15z" fill="#fff"/><path d="M2491 529v-14q-1-5-5-3l-1 8"/><path d="M2495 523q11-6 14 3 2 8-1 22-1-12-7-16z" fill="#8fbce6" stroke="#2f66b5"/></svg></span><svg viewBox="2540 494 64 72" width="64" height="72"><path d="M2572 509l18.500 15-7 21h-23l-7-21z" fill="#fafafa" stroke="#333" stroke-width="2.400"/><path d="M2561 548h24M2559 552l2-4M2587 552l-2-4" stroke="#aaa" stroke-width="2"/></svg><svg viewBox="2620 494 70 72" width="70" height="72" fill="none" stroke="#333" stroke-width="2.400"><path d="M2646 511h31M2646 506v10M2677 506v10M2637 519v32M2632 519h9M2632 551h9"/><rect x="2646" y="519" width="31" height="32" fill="#fafafa"/><path d="M2661 532v-10M2657 526l4-4 4 4M2661 538v10M2657 544l4 4 4-4M2658 535h-10M2652 531l-4 4 4 4M2665 535h10M2671 531l4 4-4 4" stroke="#4189cc"/></svg></div>
        <div class="pfill"><svg viewBox="0 0 16 10" width="16" height="10"><path d="M1.500 1.500l6.500 6.500 6.500-6.500" fill="none" stroke="#777" stroke-width="3"/></svg>Fill</div>
        <ul><li>No fill</li><li>Solid fill</li><li>Gradient fill</li><li>Picture or texture fill</li><li>Pattern fill</li></ul>
      </aside>
    </div>

    <footer class="status">
      <span class="ready">Ready</span>
      <svg viewBox="156 1800 48 48" width="48" height="48" fill="none" stroke="#5a5a5a" stroke-width="2.200"><circle cx="176" cy="1812" r="3.500"/><path d="M164 1814q-2 4 4 6l3 2v6l-4 11q2 3 4 0l5-9M188 1814q2 4-4 6l-3 2v3"/><circle cx="184" cy="1834" r="8.500" fill="#4a4a4a" stroke="none"/><path d="M184 1829v6M184 1837v2.500" stroke="#fff"/></svg>
      <span class="acc">Accessibility: Investigate</span>
      <svg class="zoomer" viewBox="2386 1798 518 54" width="518" height="54" fill="none" stroke="#4f4f4f" stroke-width="2.400"><rect x="2392" y="1802" width="62" height="44" rx="6" fill="#adadad" stroke="none"/><rect x="2409" y="1810" width="28" height="28" rx="4" fill="#333" stroke="none"/><path d="M2418 1809v30M2428 1809v30M2408 1819h30M2408 1829h30" stroke="#adadad" stroke-width="2"/><path d="M2488 1809h12l7 8v19q0 3-3 3h-16q-3 0-3-3v-24q0-3 3-3zM2500 1809v8h7"/><rect x="2489" y="1823" width="14" height="12" rx="2"/><path d="M2489 1829h14M2496 1823v12"/><path d="M2556 1808v10h22v-10M2556 1840v-10h22v10"/><path d="M2553 1824h30" stroke-dasharray="3 2.500"/><path d="M2618 1824h16" stroke-width="3"/><rect x="2648" y="1821" width="200" height="8" rx="4" fill="#a3a3a3" stroke="none"/><circle cx="2748" cy="1824" r="16" fill="#f8f8f8" stroke="#cfcfcf" stroke-width="1"/><path d="M2862 1824h16M2870 1816v16"/></svg>
      <span class="pct">100%</span>
    </footer>
  </main>

  <div class="dock">
    <svg class="app run" viewBox="0 0 62 62"><rect width="62" height="62" rx="14" fill="#e6e9ee"/><path d="M14 0h20q-6 16-7 37h8q0 14 4 25H14Q0 62 0 48V14Q0 0 14 0z" fill="url(#gFinder)"/><path d="M17 18v5M46 18v5" stroke="#222" stroke-width="2.500" stroke-linecap="round"/><path d="M12 41q19 16 38 0" fill="none" stroke="#222" stroke-width="2.500" stroke-linecap="round"/></svg>
    <svg class="app" viewBox="0 0 62 62"><rect width="62" height="62" rx="14" fill="#dcdde1"/><rect x="10" y="11" width="12" height="11" rx="2.500" fill="#7ed957"/><rect x="25" y="11" width="12" height="11" rx="2.500" fill="#f0b541"/><rect x="40" y="11" width="12" height="11" rx="2.500" fill="#ec9840"/><rect x="10" y="26" width="12" height="11" rx="2.500" fill="#cc2f2a"/><rect x="25" y="26" width="12" height="11" rx="2.500" fill="#9aa0a3"/><rect x="40" y="26" width="12" height="11" rx="2.500" fill="#e84a62"/><rect x="10" y="41" width="12" height="11" rx="2.500" fill="#8a3fd0"/><rect x="25" y="41" width="12" height="11" rx="2.500" fill="#3b83f0"/><rect x="40" y="41" width="12" height="11" rx="2.500" fill="#62cfa5"/></svg>
    <svg class="app" viewBox="0 0 62 62"><rect width="62" height="62" rx="14" fill="url(#gWhite)"/><circle cx="31" cy="31" r="26.500" fill="#3f8fe8"/><circle cx="31" cy="31" r="23.500" fill="none" stroke="#d9ecff" stroke-width="3" stroke-dasharray="1 2"/><path d="M50 14L35 35l-8-7z" fill="#e5473c"/><path d="M13 47l14-19 8 7z" fill="#f5f5f5"/></svg>
    <svg class="app" viewBox="0 0 62 62"><rect width="62" height="62" rx="14" fill="url(#gGreen)"/><path d="M31 11c13 0 23 8 23 18.500S44 48 31 48q-4 0-7-1-2 3-7 4 3-3 2-7-11-5-11-14.500C8 19 18 11 31 11z" fill="#f4f9f3"/></svg>
    <svg class="app" viewBox="0 0 62 62"><rect width="62" height="62" rx="14" fill="url(#gMail)"/><rect x="9" y="17" width="44" height="28" rx="3" fill="#f3f3f3"/><path d="M10 18l17 16q4 3 8 0l17-16M10 44l14-13M52 44L38 31" fill="none" stroke="#b5b5b5" stroke-width="1.800"/></svg>
    <svg class="app" viewBox="0 0 62 62"><clipPath id="mp"><rect width="62" height="62" rx="14"/></clipPath><g clip-path="url(#mp)"><rect width="62" height="62" fill="#82cd72"/><path d="M0 12l62 38v12H0z" fill="#ececf0"/><path d="M0 24l14 14v24H0z" fill="#d981bd"/><path d="M34 36l24 26H34z" fill="#f4c945"/><path d="M38 0v12q4 14 24 16V0z" fill="#6cc069"/><path d="M38 0q2 22 24 24" fill="none" stroke="#eee" stroke-width="5"/><path d="M14 0h17v62H14z" fill="#f1f1f4"/><path d="M16 0h13v30H16z" fill="#3a76ea"/><circle cx="23" cy="39" r="16" fill="#fff"/><circle cx="23" cy="39" r="13.500" fill="#3a76ea"/><path d="M23 27l8 20-8-5-8 5z" fill="#fff"/></g></svg>
    <svg class="app" viewBox="0 0 62 62"><rect width="62" height="62" rx="14" fill="#fdfdfd"/><g opacity=".85"><rect x="23" y="4" width="16" height="26" rx="8" fill="#f29a38"/><rect x="23" y="4" width="16" height="26" rx="8" fill="#e9d64b" transform="rotate(45 31 31)"/><rect x="23" y="4" width="16" height="26" rx="8" fill="#a9cf5d" transform="rotate(90 31 31)"/><rect x="23" y="4" width="16" height="26" rx="8" fill="#6cbd8b" transform="rotate(135 31 31)"/><rect x="23" y="4" width="16" height="26" rx="8" fill="#6aa9e0" transform="rotate(180 31 31)"/><rect x="23" y="4" width="16" height="26" rx="8" fill="#8180cd" transform="rotate(225 31 31)"/><rect x="23" y="4" width="16" height="26" rx="8" fill="#c277b3" transform="rotate(270 31 31)"/><rect x="23" y="4" width="16" height="26" rx="8" fill="#e9604c" transform="rotate(315 31 31)"/></g></svg>
    <svg class="app" viewBox="0 0 62 62"><rect width="62" height="62" rx="14" fill="url(#gGreen)"/><rect x="9" y="17" width="31" height="27" rx="7" fill="#f4f9f3"/><path d="M42 27l10-7v22l-10-7z" fill="#e5f2e2"/></svg>
    <svg class="app" viewBox="0 0 62 62"><rect width="62" height="62" rx="14" fill="#fcfcfc"/><path d="M0 19v-5Q0 0 14 0h34q14 0 14 14v5z" fill="#e5594f"/><text x="31" y="15.500" class="cal-m" text-anchor="middle">OCT</text><text x="31" y="52" class="cal-d" text-anchor="middle">24</text></svg>
    <svg class="app" viewBox="0 0 62 62"><rect x="50" y="10" width="13" height="44" rx="3" fill="#6bbd68"/><rect x="50" y="10" width="13" height="22" fill="#6f9fce"/><rect width="60" height="62" rx="13" fill="#aa8750"/><circle cx="31" cy="31" r="19" fill="none" stroke="#8b6c3c" stroke-width="2"/><circle cx="31" cy="26" r="7.500" fill="#8b6c3c"/><path d="M17 43q3-8 14-8t14 8q-6 7-14 7t-14-7z" fill="#8b6c3c"/></svg>
    <svg class="app" viewBox="0 0 62 62"><rect width="62" height="62" rx="14" fill="#fafafa"/><circle cx="13" cy="15.500" r="4.500" fill="#3b78ee"/><circle cx="13" cy="31" r="4.500" fill="#e8493f"/><circle cx="13" cy="46.500" r="4.500" fill="#ea9a3c"/><path d="M23 15.500h33M23 31h33M23 46.500h33" stroke="#c3c3c6" stroke-width="1.800"/></svg>
    <svg class="app" viewBox="0 0 62 62"><rect width="62" height="62" rx="14" fill="#f5f4f0"/><path d="M0 17v-3Q0 0 14 0h34q14 0 14 14v3z" fill="#f7cb47"/><path d="M0 19h62" stroke="#b8b5a8" stroke-width="1.500" stroke-dasharray="1.500 1.500"/><path d="M0 31h62M0 46h62" stroke="#d4d2cb" stroke-width="1.500"/></svg>
    <svg class="app" viewBox="0 0 62 62"><rect width="62" height="62" rx="14" fill="#fff"/><circle cx="25" cy="37" r="17.500" fill="#ef8056"/><rect x="21" y="8" width="34" height="34" rx="3" fill="#55c4ee" opacity=".9"/><path d="M13 41c3-16 9-20 11-15s-2 14 2 12 6-14 10-13 0 11 4 12 6-4 8-9 5-2 8-1" fill="none" stroke="#173e60" stroke-width="3.500"/></svg>
    <svg class="app" viewBox="0 0 62 62"><rect width="62" height="62" rx="14" fill="url(#gBlk)"/><use href="#apple" transform="translate(3.500 17.500) scale(.93)" fill="#f2f2f2"/><text x="27" y="40" class="tv" textLength="26" lengthAdjust="spacingAndGlyphs">tv</text></svg>
    <svg class="app" viewBox="0 0 62 62"><rect width="62" height="62" rx="14" fill="url(#gRed)"/><path d="M24 46V18l21-6v30" fill="none" stroke="#fff" stroke-width="3.500"/><path d="M24 16l21-5v7l-21 5z" fill="#fff"/><ellipse cx="19" cy="46" rx="6.500" ry="5" fill="#fff"/><ellipse cx="40" cy="42" rx="6.500" ry="5" fill="#fff"/></svg>
    <svg class="app" viewBox="0 0 62 62"><rect width="62" height="62" rx="14" fill="url(#gBlue)"/><path d="M16 9h30l4 17H12z" fill="#fafafa"/><path d="M12 26h38v3H12z" fill="#c8d3df"/><circle cx="31" cy="16" r="5.500" fill="#5fb364"/><path d="M31 16v-5.500a5.500 5.500 0 0 1 5 7.500z" fill="#e8a13f"/><path d="M31 16l-5-3a5.500 5.500 0 0 1 5-2.500z" fill="#4a80ea"/><path d="M31 29v22" stroke="#e8eef5" stroke-width="3"/><rect x="21" y="50" width="20" height="3.500" rx="1.500" fill="#e8eef5"/></svg>
    <svg class="app" viewBox="0 0 62 62"><rect width="62" height="62" rx="14" fill="#79e35c"/><rect x="11" y="40" width="8" height="13" rx="1" fill="#f5f7f3"/><rect x="22" y="29" width="8" height="24" rx="1" fill="#f5f7f3"/><rect x="33" y="9" width="8" height="44" rx="1" fill="#f5f7f3"/><rect x="44" y="20" width="8" height="33" rx="1" fill="#f5f7f3"/></svg>
    <svg class="app" viewBox="0 0 62 62"><rect width="62" height="62" rx="14" fill="url(#gOrange)"/><path d="M47 11q5 1 3 6L17 49l-7 4 3-8z" fill="#f8f5f0" stroke="#a77a45" stroke-width=".8"/><path d="M20 53h33" stroke="#f8d9a6" stroke-width="2"/></svg>
    <svg class="app" viewBox="0 0 62 62"><rect width="62" height="62" rx="14" fill="url(#gStore)"/><path d="M36 13L19 42M26 13l20 35M10 38h24M44 38h8M17 45l-2 4" stroke="#f7f9fc" stroke-width="5" stroke-linecap="round"/></svg>
    <svg class="app run badge" viewBox="0 0 62 62"><rect width="62" height="62" rx="14" fill="#b7bcc0"/><circle cx="31" cy="31" r="25" fill="#3b3d3e"/><circle cx="31" cy="31" r="22" fill="none" stroke="#a7a9aa" stroke-width="3" stroke-dasharray="1.500 1.500"/><circle cx="31" cy="31" r="15.500" fill="none" stroke="#999" stroke-width="3.500"/><path d="M31 31h16M31 31l-8-14M31 31l-8 14" stroke="#a7a9aa" stroke-width="3"/><circle cx="31" cy="31" r="4" fill="#777"/><circle cx="55.500" cy="6.500" r="15" fill="#e14b3f"/><text x="55.500" y="13.500" class="num" text-anchor="middle">1</text></svg>
    <svg class="app run" viewBox="0 0 62 62"><use href="#chrome"/></svg>
    <i class="dsep"></i>
    <svg class="app run badge" viewBox="0 0 62 62"><rect width="62" height="62" rx="14" fill="#fff"/><path d="M11 12l30-3 10 8v33l-32 3-8-9z" fill="#fff" stroke="#1d1d1d" stroke-width="3.500" stroke-linejoin="round"/><path d="M11 12l8 8v33l-8-9zM19 20l32-3" fill="#1d1d1d" stroke="#1d1d1d" stroke-width="3"/><text x="35" y="45.500" class="serif-n big-n" text-anchor="middle">N</text><circle cx="55.500" cy="6.500" r="15" fill="#e14b3f"/><text x="55.500" y="13.500" class="num" text-anchor="middle">5</text></svg>
    <svg class="app run" viewBox="0 0 62 62"><rect width="62" height="62" rx="14" fill="#448de6"/><path d="M10 31h34q2-2 2-7 4 2 4 6 4-1 6 1-2 4-7 4-4 13-21 13-17-1-18-17z" fill="#fff"/><path d="M14 25h5v5h-5zM20 25h5v5h-5zM26 25h5v5h-5zM32 25h5v5h-5zM20 20h5v4h-5zM26 20h5v4h-5zM32 20h5v4h-5zM32 15h5v4h-5z" fill="#fff"/></svg>
    <svg class="app run" viewBox="0 0 62 62"><rect width="62" height="62" rx="14" fill="#fff"/><circle cx="31" cy="31" r="23" fill="url(#gEdge)"/><path d="M8 31q2-14 14-13 9 1 9 8-5 4-3 11 5 12 20 9-8 9-19 8Q9 52 8 31z" fill="#2566b4"/><path d="M31 26q-5 5-1 11 5 5 14 2 6-2 10-8 0 11-8 13-16 5-21-5-2-9 6-13z" fill="#fff"/></svg>
    <svg class="app run" viewBox="0 0 62 62"><rect width="62" height="62" rx="14" fill="url(#gWhite)"/><circle cx="33" cy="31" r="24" fill="url(#gPpt)"/><path d="M33 7v24h24A24 24 0 0 0 33 7z" fill="#f2a04e"/><rect x="7" y="29" width="20" height="21" rx="4" fill="#b3303b"/><text x="17" y="45.500" class="ms" text-anchor="middle">P</text></svg>
    <svg class="app run" viewBox="0 0 62 62"><rect width="62" height="62" rx="14" fill="url(#gWhite)"/><rect x="18" y="8" width="34" height="20" rx="4" fill="#8fc8fa"/><rect x="18" y="23" width="34" height="18" rx="3" fill="#568bf2"/><rect x="18" y="38" width="34" height="16" rx="4" fill="#2447cf"/><rect x="8" y="29" width="20" height="21" rx="4" fill="#2a4fa5"/><text x="18" y="45.500" class="ms" text-anchor="middle">W</text></svg>
    <svg class="app run" viewBox="0 0 62 62"><clipPath id="pd"><rect width="62" height="62" rx="14"/></clipPath><g clip-path="url(#pd)"><rect width="62" height="62" fill="#fff"/><path d="M36 0h14v26h-2Q48 10 36 0z" fill="#d93a2d"/><rect y="25" width="62" height="18" fill="#d93a2d"/><path d="M62 43v19H32q18-6 22-19z" fill="#d93a2d"/><path d="M18 62q20-6 24-19M24 62q20-6 25-19" stroke="#d93a2d" stroke-width="2.200" fill="none"/></g><text x="25" y="40.500" class="pdf" text-anchor="middle">PDF</text></svg>
    <svg class="app run" viewBox="0 0 62 62"><use href="#chrome"/></svg>
    <svg class="app run" viewBox="0 0 62 62"><rect width="62" height="62" rx="14" fill="#fff"/><path d="M40 10l11 5v32l-11 5z" fill="#4a9ae8"/><path d="M8 24l4-4 28 20v12z" fill="#2766ab"/><path d="M8 38l4 4 28-20V10z" fill="#2f78c4"/></svg>
    <svg class="app run" viewBox="0 0 62 62"><rect x="1" y="1" width="60" height="60" rx="13" fill="#0b0b0b" stroke="#c0cccc" stroke-width="2"/><rect x="6" y="6" width="50" height="50" rx="8" fill="#242424"/><path d="M11 12l6 4-6 4M20 23h9" fill="none" stroke="#fff" stroke-width="2"/></svg>
    <svg class="app run" viewBox="0 0 62 62"><rect width="62" height="62" rx="14" fill="url(#gPy)"/><rect x="11" y="11" width="39" height="39" fill="#050505"/><text x="15" y="31" class="pc" textLength="29" lengthAdjust="spacingAndGlyphs">PC</text><path d="M16 43.500h16" stroke="#fff" stroke-width="3"/></svg>
    <svg class="app run" viewBox="0 0 62 62"><rect width="62" height="62" rx="14" fill="url(#gWhite)"/><circle cx="47" cy="19" r="5" fill="#5059c9"/><rect x="38" y="25" width="16" height="20" rx="6" fill="#5059c9"/><circle cx="32" cy="17" r="7" fill="#7b83eb"/><path d="M22 25h22v16q0 10-11 10t-11-10z" fill="#7b83eb"/><rect x="8" y="18" width="23" height="24" rx="3" fill="#4a50b5"/><text x="19.500" y="36" class="ms" text-anchor="middle">T</text></svg>
    <svg class="app run" viewBox="0 0 62 62"><rect width="62" height="62" rx="14" fill="url(#gWhite)"/><rect x="15" y="8" width="19" height="30" rx="4" fill="#6abf4f"/><rect x="31" y="8" width="20" height="15" rx="3" fill="#9fe06c"/><rect x="31" y="23" width="20" height="31" rx="3" fill="#3b8a3c"/><rect x="15" y="36" width="19" height="18" rx="4" fill="#469c46"/><rect x="8" y="29" width="20" height="21" rx="4" fill="#2a7048"/><text x="18" y="45.500" class="ms" text-anchor="middle">X</text></svg>
    <i class="dsep last"></i>
    <svg class="docs" viewBox="2800 1864 66 76" width="66" height="76"><path d="M2805 1882q0-3 4-3h50q4 0 4 3v40q0 4-4 4h-50q-4 0-4-4z" fill="#6fb4e6"/><path d="M2811 1867h22l24 24v46h-46z" fill="#f6f6f6"/><path d="M2833 1867l5 20 19 4z" fill="#dadada"/><path d="M2817 1882h14M2817 1887h16M2817 1892h18M2817 1897h26M2821 1902h28M2817 1907h18M2817 1914h28M2817 1919h20" stroke="#a5a5a5" stroke-width="1.500"/><text x="2834" y="1933" class="docx" text-anchor="middle">DOCX</text></svg>
    <svg class="trash" viewBox="2884 1860 64 80" width="64" height="80"><path d="M2889 1874l7 55q1 7 8 7h22q7 0 8-7l8-55z" fill="#dcdcdd"/><ellipse cx="2915.500" cy="1874" rx="26.500" ry="6" fill="#8d8d8d"/><path d="M2892 1875l6-8 7 4 6-5 6 5 7-5 5 6 7-4 5 7-9 5-8-2-8 3-9-3-8 2z" fill="#f1f1f1" stroke="#999" stroke-width="1"/><path d="M2902 1872l5 4 3-5M2920 1870l4 6 6-3" stroke="#555" stroke-width="1.800" fill="none"/><path d="M2900 1892q8 6 14 1t14 3M2903 1908q8 6 16 0t12 4" stroke="#e8e8e8" stroke-width="3" fill="none"/></svg>
  </div>
</div>
</body>
</html>
```
FILE: styles.css
```css
* { box-sizing: border-box; }
body { margin: 0; font-family: Inter, "Liberation Sans", sans-serif; letter-spacing: -0.02em; }
svg { display: block; flex: none; }
.defs { position: absolute; }
.desktop {
  width: 3024px; height: 1964px; overflow: hidden; display: flex; flex-direction: column;
  background:
    linear-gradient(90deg, #dcdcdc 0, #c4c4c4 520px, #1545b8 526px, #2a9be0 560px, #0b0030 566px, #04001f 1000px, #000 1400px, #0b0b0b 2190px, #e8934a 2200px, #6ec4d0 2220px, #0a58c8 2270px, #04044a 2330px, #020018 100%) 0 1954px / 100% 10px no-repeat,
    linear-gradient(180deg, #000 0, #1b1b1b 30%, #b8b8b8 62%, #dedede 100%) 0 1852px / 62px 112px no-repeat,
    #000;
}

/* Menu bar */
.menubar { height: 74px; flex: none; display: flex; align-items: center; padding-left: 40px; color: #fff; font-size: 26px;
  background: linear-gradient(90deg, #1f3650 0, #1b2944 800px, #1c2441 1150px, #2a2b4d 1500px, #44455f 1950px, #5d5e74 2200px, #747483 2600px, #8d8c96 100%); }
.menus { display: grid; grid-template-columns: 109.500px 84px 88px 100px 110px 126.500px 105px 98px 138px 60px; width: 1019px; }
.menus, .clock { margin-top: -2px; white-space: nowrap; font-weight: 500; }
.menus { letter-spacing: -0.02em; }
.menus b { font-weight: 700; }
.extras { display: flex; margin-left: 632px; }
.clock { display: grid; grid-template-columns: 137px auto; color: #f5f5f7; }
.serif-n { font: 700 23px "Liberation Serif", serif; }
.big-n { font-size: 33px; fill: #1d1d1d; }
.vi { font: 400 22px Inter, sans-serif; }

/* Excel window */
.window { margin-top: 2px; height: 1776px; flex: none; background: #f5f5f5; border-radius: 20px; overflow: hidden; display: flex; flex-direction: column; }
.titlebar { height: 64px; flex: none; display: flex; align-items: center; }
.autosave { width: 107px; font-size: 22px; color: #666; font-weight: 500; letter-spacing: -0.01em; }
.doc { display: flex; align-items: center; margin-left: 455px; width: 1274px; font-size: 24px; white-space: nowrap; }
.doc-name { width: 390px; margin-left: 4px; color: #2b2b2b; font-weight: 500; letter-spacing: 0.004em; }
.doc-state { width: 221px; color: #666; }
.search { display: flex; align-items: center; width: 559px; height: 42px; border: 2px solid #e9e9e9; border-radius: 8px; font-size: 25px; font-weight: 500; color: #7a7a7a; }
.search span { margin: 2px 0 0 1px; }
.tabbar { height: 60px; flex: none; display: flex; align-items: center; padding-top: 4px; }
.tabs { align-self: flex-start; display: grid; grid-template-columns: 122px 122px 113px 204px 165px 104px 137px 109px 130px; width: 2574px; padding-left: 22px; font-size: 25.500px; letter-spacing: -0.005em; font-weight: 500; color: #262626; height: 52px; line-height: 50px; white-space: nowrap; }
.tabs b { font-weight: 700; }
.tabs .on { background: linear-gradient(#3a7449, #3a7449) 0 46px / 76px 6px no-repeat; }
.comments, .share { height: 48px; border-radius: 9px; display: flex; align-items: center; font: 500 25px Inter, sans-serif; letter-spacing: -0.02em; padding: 0; margin-top: 1px; }
.comments { width: 209px; margin-left: 23px; border: 2px solid #d9d9d9; background: #fff; padding-left: 13px; gap: 4px; color: #000; }
.share { width: 178px; margin-left: 20px; border: 0; background: #377d4a; color: #fff; padding-left: 18px; gap: 2px; font-weight: 600; }
.share svg:last-child { margin-left: 6px; }

/* Ribbon */
.ribbon { height: 148px; flex: none; display: flex; align-items: flex-start; }
.sep { width: 2px; height: 124px; margin-top: 18px; background: #d2d2d2; flex: none; }
.sep.up { margin-top: 8px; }
.mini { width: 2px; height: 36px; background: #d2d2d2; flex: none; }
.group { flex: none; }
.row { display: flex; align-items: center; height: 48px; margin-top: 18px; }
.row.two { height: 52px; margin-top: 14px; }
.big { display: flex; flex-direction: column; align-items: center; padding-top: 10px; font-size: 21px; line-height: 24px; color: #111; font-weight: 400; white-space: nowrap; }
.big svg { margin-bottom: 3px; }
.clip { width: 207px; display: flex; padding-left: 16px; }
.clip > svg { margin-top: 6px; }
.combo { height: 48px; border: 2px solid #cacaca; border-radius: 6px; background: #fff; display: flex; align-items: center; justify-content: space-between; font-size: 23px; color: #111; padding: 0 7px 0 10px; white-space: nowrap; }
.font { width: 539px; }
.font .row { padding-left: 21px; }
.font .two { padding-left: 20px; }
.fam { width: 282px; letter-spacing: 0.012em; }
.size { width: 106px; margin-left: 5px; padding-left: 9px; }
.fmt { font: 400 27px Inter, sans-serif; fill: #3a3a3a; }
.bold { font-weight: 800; }
.ital { font: italic 400 29px "Liberation Serif", serif; }
.align { width: 322px; padding-left: 18px; }
.orient { font: 400 20px Inter, sans-serif; fill: #444; }
.wrap { width: 276px; padding-left: 18px; font-size: 22px; color: #111; }
.abc { font: 400 19px "Open Sans", sans-serif; fill: #444; }
.wrap span { white-space: nowrap; }
.wt { width: 112px; } .mc { width: 169px; }
.number { width: 350px; padding-left: 19px; }
.gen { width: 309px; padding-left: 10px; padding-right: 6px; letter-spacing: 0; }
.sym { font: 300 32px Inter, sans-serif; fill: #333; }
.dec { font: 400 18px Inter, sans-serif; fill: #444; }
.styles { width: 361px; padding-left: 20px; display: flex; }
.cf { width: 120px; } .ft { width: 106px; } .cs { width: 92px; }
.cells { width: 337px; padding-left: 19px; display: flex; }
.ins { width: 96px; } .del { width: 105px; } .fmtc { width: 97px; }
.edit { width: 307px; display: flex; }
.edit > svg { margin-top: 6px; }
.sort { width: 90px; } .find { width: 107px; }
.addins { width: 127px; margin-left: 1px; } .copilot { width: 117px; margin-left: 1px; }

/* Formula bar */
.formula { height: 60px; flex: none; display: flex; align-items: flex-start; background: linear-gradient(#fff 0 53px, #a0a0a0 53px 54px, #f6f6f6 54px 58px, #a0a0a0 58px 60px); border-top: 2px solid #cbcbcb; }
.namebox { width: 170px; height: 52px; border: 2px solid #cbcbcb; display: flex; justify-content: space-between; align-items: center; padding-left: 18px; font-size: 25px; color: #111; background: #fff; }
.fxbar { margin-top: 2px; }
.fx { font: italic 400 36px "Liberation Serif", serif; fill: #3d3d3d; stroke: #3d3d3d; stroke-width: .5px; }
.input { width: 2616px; height: 40px; margin-top: 7px; border: 1px solid #cbcbcb; border-radius: 5px 0 0 5px; background: #fdfdfd; margin-left: 1px; }
.drop { width: 46px; height: 40px; margin-top: 7px; border: 1px solid #c4c4c4; border-radius: 0 4px 4px 0; background: #fff; }
.drop svg { width: 44px; }

/* Worksheet */
.work { display: flex; height: 1388px; flex: none; }
.sheet { width: 2422px; display: flex; flex-direction: column; }
.cols { display: flex; height: 44px; flex: none; background: linear-gradient(#fff, #f6f6f6); border-bottom: 2px solid #b9b9b9; overflow: hidden; }
.cols > * { width: 130px; flex: none; border-right: 2px solid #e2e2e2; text-align: center; font-size: 22px; line-height: 44px; color: #5f5f5f; font-weight: 400; }
.cols .wide { width: 146px; }
.cols b { background: #ececec; color: #3a7449; font-weight: 500; }
.cols .corner { width: 46px; border-right-color: #b9b9b9; background: linear-gradient(135deg, transparent 0 50%, #dedede 50%) 10px 8px / 30px 30px no-repeat; }
.body { display: flex; height: 1292px; clip-path: inset(-4px 0 0 0); }
.rows { width: 46px; flex: none; border-right: 2px solid #b9b9b9; background: #fafafa; }
.rows > * { display: block; height: 32px; border-bottom: 2px solid #dedede; text-align: center; line-height: 33px; font-size: 22px; color: #5f5f5f; }
.rows b { background: #ececec; color: #3a7449; font-weight: 500; }
.grid { position: relative; flex: 1; display: grid; grid-template-columns: 130px 146px; grid-auto-rows: 32px; align-content: start; font-family: "Open Sans", "Noto Sans", sans-serif; letter-spacing: -0.03em;
  background:
    linear-gradient(transparent 30px, #d4d4d4 30px) 0 0 / 100% 32px,
    linear-gradient(90deg, transparent 128px, #d4d4d4 128px) 0 0 / 130px 100% no-repeat,
    linear-gradient(#fff, #fff) 0 0 / 146px 100% no-repeat,
    linear-gradient(90deg, transparent 128px, #d4d4d4 128px) 146px 0 / 130px 100%, #fff; }
.cell { grid-column: 2; font-size: 22px; line-height: 31px; text-align: right; padding-right: 6px; color: #000; white-space: nowrap; }
.r3 { grid-row: 3; } .r4 { grid-row: 4; } .r5 { grid-row: 5; }
.cursor { position: absolute; left: -4px; top: -4px; width: 136px; height: 38px; border: 3px solid #3a7449; }
.cursor::after { content: ""; position: absolute; right: -5px; bottom: -5px; width: 11px; height: 11px; background: #3a7449; border: solid #fff; border-width: 1px 0 0 1px; }
.kpi { position: absolute; width: 1048px; height: 130px; border-radius: 22px; background: #2e5f7f; padding: 29px 0 0 255px; display: flex; flex-direction: column; gap: 4px; }
.kpi div { width: 446px; height: 42px; border: 2px solid #bdbdbd; background: #fff; font-size: 22px; line-height: 39px; padding-left: 13px; color: #000; white-space: nowrap; }
.kpi .strong { font-weight: 700; font-size: 20px; line-height: 38px; letter-spacing: -0.058em; } .kpi .cap { font-size: 20px; line-height: 38px; letter-spacing: -0.038em; }
.k1 { left: 802px; top: 28px; } .k2 { left: 794px; top: 222px; } .k3 { left: 794px; top: 414px; }
.slicer { position: absolute; width: 290px; height: 414px; border: 1.500px solid #8f8f8f; background: #fff; padding: 0 6px; }
.slicer h3 { margin: 0 0 6px; height: 43px; border-bottom: 2px solid #a8a8a8; display: flex; justify-content: space-between; align-items: center; font-size: 22px; font-weight: 700; letter-spacing: -0.068em; padding: 0 8px 1px 0; white-space: nowrap; }
.slicer p { margin: 0 7px 4px 7px; height: 40px; border: 2px solid #cbcbcb; border-radius: 7px; padding-left: 12px; font-size: 22px; line-height: 33px; white-space: nowrap; }
.slicer .on { background: #bfbfbf; border-color: #979797; }
.s1 { left: 62px; top: 576px; } .s2 { left: 384px; top: 564px; } .s3 { left: 720px; top: 558px; } .s4 { left: 1072px; top: 578px; }
.slicer.s1, .slicer.s2 { width: 288px; }
.s1 p { margin-right: 5px; }
.s2 p { margin-left: 5px; margin-right: 7px; }

.sheettabs { height: 52px; flex: none; border-top: 2px solid #c6c6c6; background: linear-gradient(#ebebeb, #f2f2f2 20%, #ededed); display: flex; align-items: flex-start; font-size: 24px; color: #5c5c5c; font-weight: 500; }
.sheettabs > * { white-space: nowrap; }
.sheettabs span, .sheettabs b { height: 42px; line-height: 47px; text-align: center; border-left: 2px solid #c9c9c9; flex: none; }
.sheettabs span { padding-right: 2px; }
.sheettabs b { width: 192px; background: #fff; color: #3b7d4c; font-weight: 700; margin-top: -2px; height: 46px; line-height: 51px; border-radius: 0 0 6px 6px; box-shadow: 0 2px 2px #999; border: 0; }
.t1 { width: 216px; } .t2 { width: 240px; } .t3 { width: 320px; } .t4 { width: 234px; } .t5 { width: 159px; }
.sheettabs .t6 { width: 79px; border: 0; border-right: 2px solid #c9c9c9; padding: 13px 0 0 30px; }

/* Format pane */
.panel { width: 602px; border-left: 2px solid #c9c9c9; background: #ebebeb; display: flex; flex-direction: column; }
.ptabs { display: flex; height: 54px; font-size: 26px; font-weight: 500; color: #262626; line-height: 56px; letter-spacing: 0; }
.ptabs span { width: 302px; padding-left: 16px; background: #e4e4e4; border-right: 2px solid #c9c9c9; border-bottom: 2px solid #c9c9c9; }
.ptabs div { flex: 1; padding: 0 16px 0 15px; display: flex; justify-content: space-between; align-items: center; letter-spacing: -0.004em; }
.picons { height: 104px; border-bottom: 2px solid #d0d0d0; display: flex; align-items: flex-end; padding-left: 24px; }
.picons span { width: 80px; height: 74px; border: 2px solid #d0d0d0; border-bottom: 0; border-radius: 5px 5px 0 0; background: #f5f5f5; margin-bottom: -2px; }
.picons > svg { margin: 0 4px 0 12px; margin-bottom: -2px; }
.pfill { margin-top: 10px; height: 52px; border: solid #cfcfcf; border-width: 2px 0; background: linear-gradient(#e6e6e6, #dedede); display: flex; align-items: center; gap: 11px; padding: 0 0 3px 17px; font-size: 26px; color: #262626; font-weight: 500; box-shadow: 0 -10px #f3f3f3; }
.panel ul { list-style: none; margin: 15px 0 0; padding: 0 0 0 33px; font-size: 24px; line-height: 40px; color: #b0b0b0; letter-spacing: 0; }
.panel li { display: flex; align-items: center; gap: 12px; }
.panel li::before { content: ""; width: 28px; height: 28px; border-radius: 50%; background: #f4f4f4; border: 1px solid #dcdcdc; }

/* Status bar */
.status { height: 56px; flex: none; border-top: 2px solid #b9b9b9; background: linear-gradient(#f0f0f0, #d9d9d9); display: flex; align-items: center; font-size: 24px; color: #626262; padding-left: 48px; letter-spacing: 0; }
.ready { width: 108px; } .acc { width: 2182px; }
.pct { margin-left: 7px; }

/* Dock */
.dock { width: 2900px; height: 98px; flex: none; margin: 4px 0 0 62px; border: 2px solid rgba(255,255,255,.22); border-radius: 30px; display: flex; padding: 13px 0 0 13.500px; gap: 18.400px;
  background: linear-gradient(90deg, #a1a1a1 0, #a0a0a0 380px, #5c5c7c 560px, #5a596c 900px, #575759 1300px, #565656 2020px, #5c6f8a 2180px, #59597b 2380px, #565568 100%); }
.app { width: 62px; height: 62px; overflow: visible; border-radius: 14px; }
.run { height: 84px; padding-bottom: 22px; border-radius: 0; background: radial-gradient(circle at 50% 75px, #111 0 3.800px, transparent 4.400px); }
.dsep { width: 2px; height: 70px; background: #2c2c34; margin: -1px 6.300px 0 10.500px; }
.dsep.last { margin-right: 4px; margin-left: 7.500px; }
.docs { margin-top: -6px; margin-left: -1px; } .trash { margin-top: -10px; margin-left: 1px; }
.num { font: 400 21px Inter, sans-serif; fill: #fff; }
.cal-m { font: 600 12.500px Inter, sans-serif; fill: #fff; }
.cal-d { font: 300 39px Inter, sans-serif; fill: #222; letter-spacing: -1.500px; }
.tv { font: 500 26px Inter, sans-serif; fill: #f2f2f2; }
.ms { font: 700 16px Inter, sans-serif; fill: #fff; }
.pdf { font: 700 17px Inter, sans-serif; fill: #fff; }
.pc { font: 700 22px Inter, sans-serif; fill: #fff; }
.docx { font: 500 10px Inter, sans-serif; fill: #555; }
```
